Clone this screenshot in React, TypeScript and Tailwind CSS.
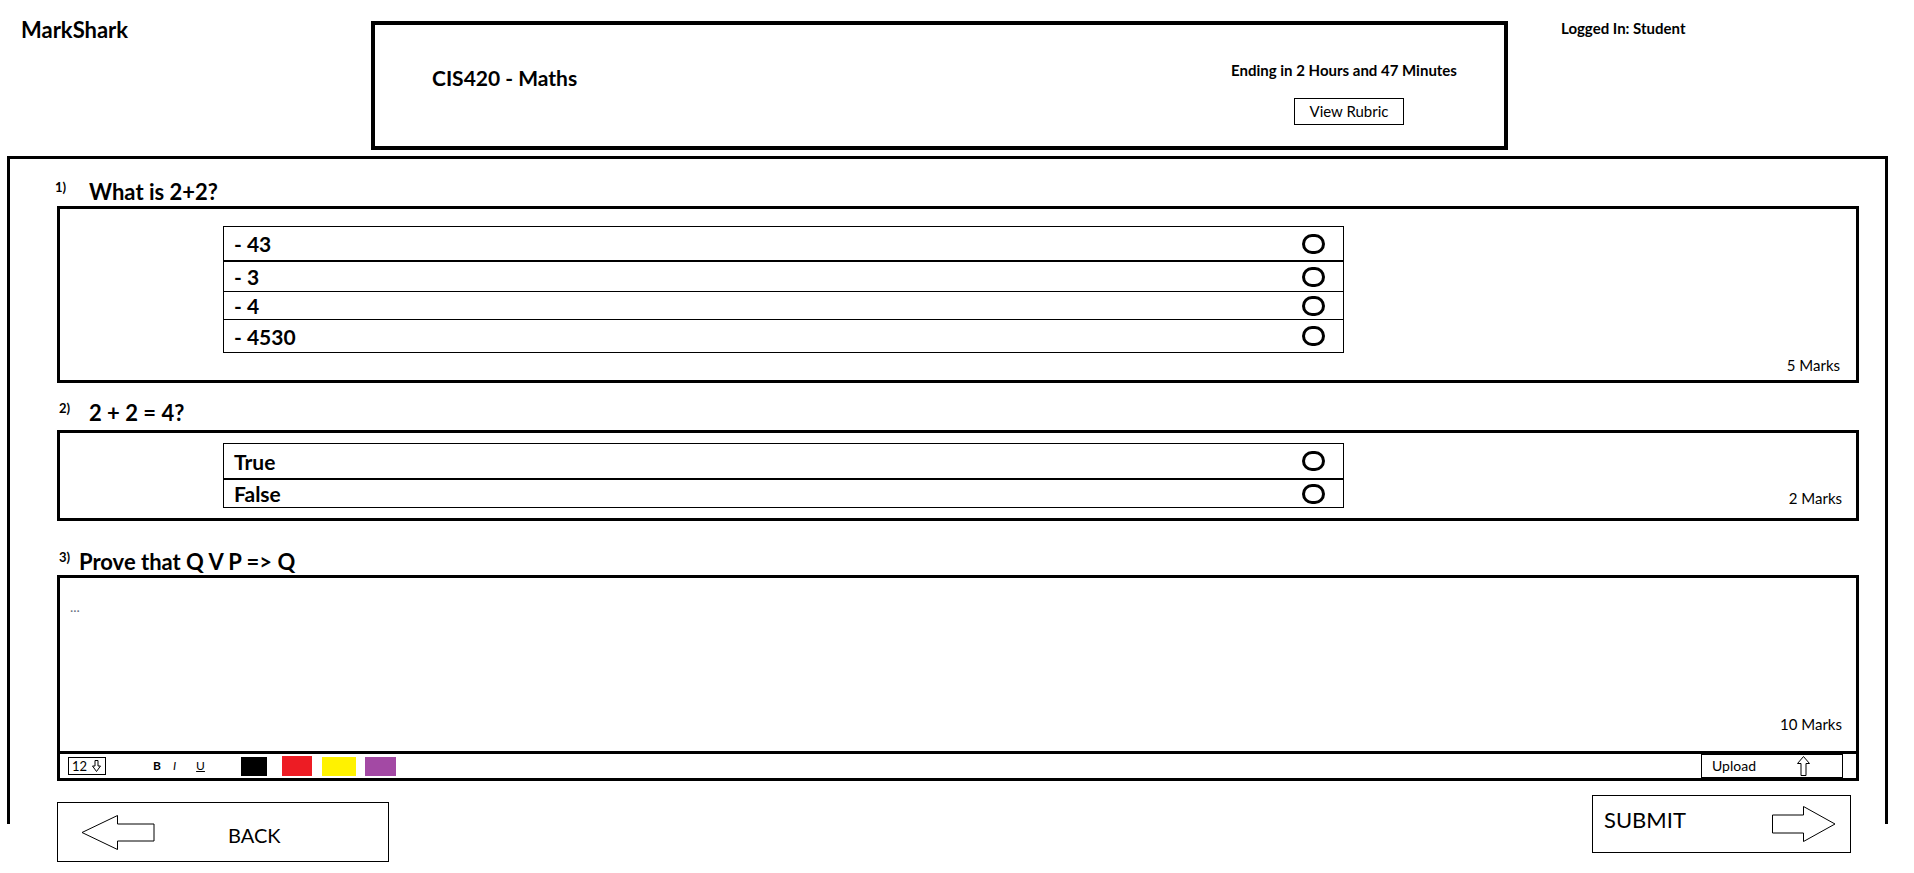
import React from "react";

type Opt = { text: string; cls: string };

const q1Options: Opt[] = [
  { text: "- 43", cls: "h-[35px] border-b-2" },
  { text: "- 3", cls: "h-[30px] border-b" },
  { text: "- 4", cls: "h-[28px] border-b" },
  { text: "- 4530", cls: "h-[32px]" },
];

const q2Options: Opt[] = [
  { text: "True", cls: "h-[36px] border-b-2" },
  { text: "False", cls: "h-[27px]" },
];

function Radio() {
  return <span className="block w-[23px] h-[20px] rounded-full border-[3px] border-black" />;
}

function OptionTable({ items, className }: { items: Opt[]; className: string }) {
  return (
    <div className={`w-[1121px] border border-black self-start ${className}`}>
      {items.map((o) => (
        <div key={o.text} className={`flex items-center justify-between border-black pl-[10px] pr-[18px] ${o.cls}`}>
          <span className="text-[21px] font-bold leading-none">{o.text}</span>
          <Radio />
        </div>
      ))}
    </div>
  );
}

function QuestionTitle({ n, text, className, labelW }: { n: string; text: string; className: string; labelW: string }) {
  return (
    <div className={`flex items-start h-[26px] ${className}`}>
      <span className={`text-[13px] font-bold leading-none pt-[2px] ${labelW}`}>{n}</span>
      <span className="text-[22px] font-bold leading-[26px]">{text}</span>
    </div>
  );
}

function Marks({ text, className }: { text: string; className: string }) {
  return <span className={`ml-auto self-end text-[15px] leading-[17px] ${className}`}>{text}</span>;
}

function LeftArrow() {
  return (
    <svg width="74" height="35" viewBox="0 0 74 35">
      <path d="M1 17.5 L36.5 0.5 L36.5 9 L73 9 L73 26 L36.5 26 L36.5 34.5 Z" fill="white" stroke="black" strokeWidth="1" />
    </svg>
  );
}

function RightArrow() {
  return (
    <svg width="64" height="36" viewBox="0 0 64 36">
      <path d="M0.5 9 L31.5 9 L31.5 0.5 L63 18 L31.5 35.5 L31.5 27 L0.5 27 Z" fill="white" stroke="black" strokeWidth="1" />
    </svg>
  );
}

function UpArrow() {
  return (
    <svg width="13" height="20" viewBox="0 0 13 20">
      <path d="M6.5 0.5 L12.5 7.5 L9 7.5 L9 19.5 L4 19.5 L4 7.5 L0.5 7.5 Z" fill="white" stroke="black" strokeWidth="1" />
    </svg>
  );
}

function DownArrow() {
  return (
    <svg width="9" height="12" viewBox="0 0 9 12">
      <path d="M3 0.5 L6 0.5 L6 6 L8.5 6 L4.5 11.5 L0.5 6 L3 6 Z" fill="white" stroke="black" strokeWidth="1" />
    </svg>
  );
}

export default function App() {
  return (
    <div className="w-[1914px] h-[873px] overflow-hidden bg-white text-black font-['Lato',sans-serif]">
      {/* top bar */}
      <header className="flex items-start h-[156px]">
        <div className="w-[371px] pl-[21px] pt-[16px] text-[22px] font-bold leading-[28px]">MarkShark</div>
        <div className="mt-[21px] w-[1137px] h-[129px] border-4 border-black flex items-start">
          <div className="pl-[57px] pt-[40px] text-[21px] font-bold leading-[26px]">CIS420 - Maths</div>
          <div className="ml-auto mr-[40px] w-[240px] pt-[36px] flex flex-col items-center">
            <div className="text-[15px] font-bold leading-[18px]">Ending in 2 Hours and 47 Minutes</div>
            <button className="mt-[19px] ml-[10px] w-[110px] h-[27px] border border-black text-[15px] leading-none">
              View Rubric
            </button>
          </div>
        </div>
        <div className="ml-[53px] mt-[20px] text-[15px] font-bold leading-[17px]">Logged In: Student</div>
      </header>

      <main className="ml-[7px] w-[1881px] h-[668px] border-t-[3px] border-x-[3px] border-black">
        {/* Question 1 */}
        <QuestionTitle n="1)" text="What is 2+2?" className="mt-[20px] ml-[45px]" labelW="w-[34px]" />
        <div className="mt-[1px] ml-[47px] w-[1802px] h-[177px] border-[3px] border-black flex">
          <OptionTable items={q1Options} className="ml-[163px] mt-[17px]" />
          <Marks text="5 Marks" className="mr-[16px] mb-[6px]" />
        </div>

        {/* Question 2 */}
        <QuestionTitle n="2)" text="2 + 2 = 4?" className="mt-[17px] ml-[49px]" labelW="w-[30px]" />
        <div className="mt-[4px] ml-[47px] w-[1802px] h-[91px] border-[3px] border-black flex">
          <OptionTable items={q2Options} className="ml-[163px] mt-[10px]" />
          <Marks text="2 Marks" className="mr-[14px] mb-[11px]" />
        </div>

        {/* Question 3 */}
        <QuestionTitle n="3)" text="Prove that Q V P => Q" className="mt-[28px] ml-[49px]" labelW="w-[20px]" />
        <div className="ml-[47px] w-[1802px] h-[206px] border-[3px] border-black flex flex-col">
          <div className="h-[173px] flex">
            <span className="pl-[10px] pt-[22px] text-[14px] text-gray-500 leading-none">...</span>
            <Marks text="10 Marks" className="mr-[14px] mb-[18px]" />
          </div>
          <div className="h-[27px] border-t-[3px] border-black flex items-center">
            <div className="ml-[8px] w-[38px] h-[18px] border border-black flex items-center gap-[5px] pl-[3px]">
              <span className="text-[13px] leading-none">12</span>
              <DownArrow />
            </div>
            <span className="ml-[47px] text-[12px] font-bold leading-none">B</span>
            <span className="ml-[12px] text-[12px] italic leading-none">I</span>
            <span className="ml-[20px] text-[12px] underline leading-none">U</span>
            <span className="ml-[36px] w-[26px] h-[19px] bg-black" />
            <span className="ml-[15px] w-[30px] h-[20px] bg-[#ed1c24]" />
            <span className="ml-[10px] w-[34px] h-[19px] bg-[#fff200]" />
            <span className="ml-[9px] w-[31px] h-[19px] bg-[#a349a4]" />
            <div className="ml-auto mr-[13px] w-[142px] h-[24px] border border-black flex items-center pl-[10px]">
              <span className="text-[14px] leading-none">Upload</span>
              <span className="ml-auto mr-[32px]">
                <UpArrow />
              </span>
            </div>
          </div>
        </div>

        {/* Navigation */}
        <div className="ml-[47px] w-[1794px] flex justify-between items-start">
          <button className="mt-[21px] w-[332px] h-[60px] border border-black flex items-center pl-[23px]">
            <LeftArrow />
            <span className="ml-[73px] mt-[6px] text-[20px] leading-none">BACK</span>
          </button>
          <button className="mt-[14px] w-[259px] h-[58px] border border-black flex items-center pl-[11px] pr-[14px]">
            <span className="mb-[8px] text-[22px] leading-none">SUBMIT</span>
            <span className="ml-auto">
              <RightArrow />
            </span>
          </button>
        </div>
      </main>
    </div>
  );
}
